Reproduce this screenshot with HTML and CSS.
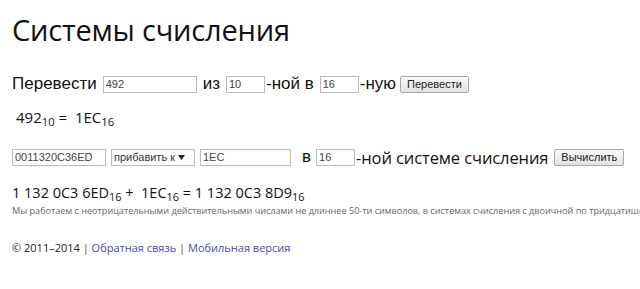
FILE: index.html
```html
<!DOCTYPE html>
<html lang="ru">
<head>
<meta charset="UTF-8" />
<title>Системы счисления</title>
<link rel="stylesheet" href="styles.css">
</head>
<body>

<h1>Системы счисления</h1>

<form class="row convert">
  Перевести <input type="text" class="num" value="492" />
  из <input type="text" class="base" value="10" />-ной в <input type="text" class="base" value="16" />-ную
  <button type="button">Перевести</button>
</form>

<p class="result">492<sub>10</sub> =&nbsp; 1EC<sub>16</sub></p>

<form class="row calc">
  <input type="text" class="num" value="0011320C36ED" />
  <select><option>прибавить к</option></select>
  <input type="text" class="num2" value="1EC" />
  <span class="in">в</span><input type="text" class="base" value="16" /><span class="seg">-ной системе счисления</span>
  <button type="button">Вычислить</button>
</form>

<p class="sum">1 132 0C3 6ED<sub>16</sub> +&nbsp; 1EC<sub>16</sub> = 1 132 0C3 8D9<sub>16</sub></p>
<p class="note">Мы работаем с неотрицательными действительными числами не длиннее 50-ти символов, в системах счисления с двоичной по тридцатишестеричную.</p>

<div class="footer">
  © 2011–2014 <span class="sep">|</span> <a href="#" class="dotted">Обратная связь</a> <span class="sep">|</span> <a href="#">Мобильная версия</a>
</div>

</body>
</html>
```

FILE: styles.css
```css
body { margin:0; padding:0 12px; font-family: "Open Sans", "Noto Sans", sans-serif; color:#111; background:#fff; overflow:hidden; }
h1 { font-weight:normal; font-size:29px; margin:0; padding-top:10px; height:44px; line-height:40px; letter-spacing:-0.2px; }

.row { display:flex; align-items:center; white-space:nowrap; }
.convert { margin-top:17px; font-family:"Liberation Sans", Arial, sans-serif; font-size:17px; height:26px; }
.convert input { margin:0 6px; }
.convert .base { margin-right:1px; }

input { font-family:"Liberation Sans", Arial, sans-serif; font-size:11px; color:#444; border:1px solid #bcbcbc; height:15px; padding:0 2px; box-sizing:content-box; }
.num { width:88px; }
.num2 { width:85px; }
.base { width:33px; }

button { font-family:"Liberation Sans", Arial, sans-serif; font-size:11px; color:#222; background:linear-gradient(#fafafa, #e2e2e2); border:1px solid #a8a8a8; border-radius:2px; padding:1px 6px; height:17px; margin-left:4px; }

.result { font-size:15px; margin:9px 0 0 4px; line-height:22px; }
sub { font-size:0.75em; vertical-align:-0.3em; line-height:0; }

.calc { margin-top:17px; height:24px; font-size:16px; }
.calc input, .calc select { margin-right:5px; }
.calc .base { margin:0 1px 0 5px; }
.calc .in { margin-left:6px; font-family:"Liberation Sans", Arial, sans-serif; font-size:17px; }
select {
  -webkit-appearance:none; appearance:none;
  font-family:"Liberation Sans", Arial, sans-serif; font-size:11px; color:#333;
  border:1px solid #bcbcbc; height:17px; width:84px; padding:0 14px 0 2px;
  background:#fff url("data:image/svg+xml;utf8,<svg xmlns='http://www.w3.org/2000/svg' width='7' height='5'><path d='M0 0h7L3.5 5z' fill='%23222'/></svg>") no-repeat right 9px center;
}
.seg { font-size:16.5px; letter-spacing:-0.1px; }
.calc button { margin-left:6px; }

.sum { font-size:14.5px; margin:13px 0 0; line-height:22px; }
.note { font-size:9.1px; color:#666; margin:0; white-space:nowrap; line-height:14px; }

.footer { margin-top:22px; font-size:11px; color:#222; }
.footer a { color:#4a4ab8; text-decoration:none; border-bottom:1px solid #4a4ab8; }
.footer a.dotted { border-bottom:1px dotted #777; }
.sep { color:#3a5a3a; }
```
